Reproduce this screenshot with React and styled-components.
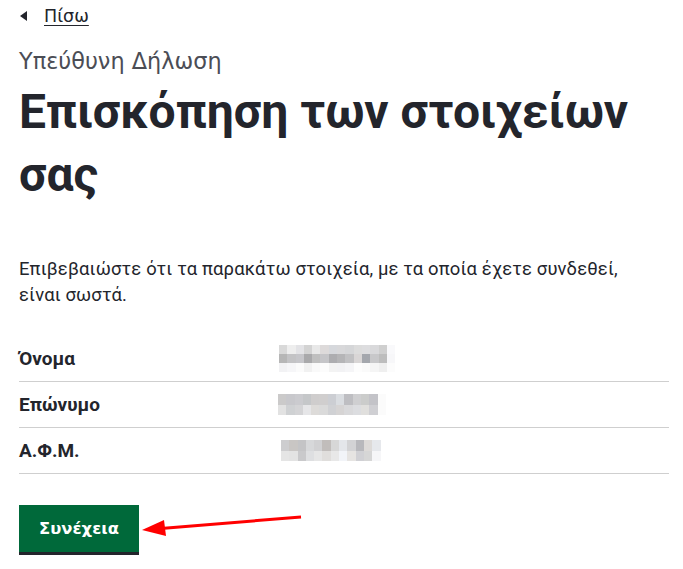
import React from "react";
import styled, { createGlobalStyle } from "styled-components";

const Global = createGlobalStyle`
  html, body { margin: 0; padding: 0; background: #fff; }
  body { font-family: Roboto, "Noto Sans", sans-serif; color: #23252c; }
`;

const Page = styled.div`
  padding: 6px 14px 0 19px;
  display: flex;
  flex-direction: column;
`;

const Back = styled.a`
  display: inline-flex;
  align-items: center;
  gap: 17px;
  font-family: "DejaVu Sans", sans-serif;
  font-size: 17.5px;
  line-height: 20px;
  color: #23252c;
  text-decoration: underline;
  text-underline-offset: 3px;
  align-self: flex-start;
`;

const Triangle = styled.span`
  width: 0;
  height: 0;
  margin-left: 1px;
  border-top: 5.5px solid transparent;
  border-bottom: 5.5px solid transparent;
  border-right: 7px solid #23252c;
`;

const Caption = styled.div`
  margin-top: 21px;
  font-family: "DejaVu Sans", sans-serif;
  font-size: 22.4px;
  line-height: 28px;
  color: #4b4d55;
`;

const Title = styled.h1`
  margin: 5px 0 0;
  font-family: Roboto, sans-serif;
  font-weight: 700;
  font-size: 48px;
  line-height: 63px;
  color: #23252c;
`;

const Lead = styled.p`
  margin: 50px 0 0;
  max-width: 622px;
  font-size: 18.4px;
  letter-spacing: 0.15px;
  line-height: 26px;
`;

const Table = styled.div`
  margin-top: 28px;
  width: 650px;
  display: flex;
  flex-direction: column;
`;

const Row = styled.div`
  display: grid;
  grid-template-columns: 260px 1fr;
  align-items: center;
  height: 45px;
  border-bottom: 1px solid #cfcfcf;
`;

const Label = styled.div`
  font-weight: 700;
  font-size: 19px;
`;

const Pixels = styled.div`
  display: grid;
  grid-template-columns: repeat(${(p) => p.$cols}, 8.3px);
  grid-auto-rows: ${(p) => p.$rowH}px;
  margin-left: ${(p) => p.$offset}px;
`;

const Cell = styled.span`
  background: ${(p) => p.$c};
`;

const Actions = styled.div`
  position: relative;
  margin-top: 31px;
  height: 50px;
`;

const Button = styled.button`
  background: #00693a;
  color: #fff;
  border: 0;
  border-bottom: 3px solid #23252c;
  font-family: "DejaVu Sans", sans-serif;
  font-weight: 700;
  font-size: 16.4px;
  height: 50px;
  padding: 0 20px;
  cursor: pointer;
`;

const Arrow = styled.svg`
  position: absolute;
  left: 112px;
  top: -1px;
  overflow: visible;
`;

const pix1 = [
  "#d9d9d9","#eeeeee","#e3e3e6","#d3d3d3","#e8e8e8","#dddada","#d6d8dc","#d8d8da","#d5d6d8","#dcdcdc","#dddddf","#d9d9db","#cfcfcf","#f9f9fb",
  "#b6b6b6","#c3c3c5","#c6c6ca","#a9a9ab","#bfbfbf","#c5c5c8","#adadb0","#b5b5b7","#c1c1c3","#d9d6d6","#a4a7ad","#c8c8ca","#bdbdbd","#f7f7f9",
  "#f2f2f4","#f6f6f8","#fbfbfb","#f1f1f1","#f9f9f9","#fcfcfc","#f3f3f3","#f2f2f4","#f5f5f7","#fdfdfd","#fafafa","#f5f5f5","#efefef","#fcfcfc",
];
const pix2 = [
  "#cbcaca","#c8c8cc","#cbcbcf","#c5c7c9","#cfcdcd","#d0cece","#ccced3","#dadde1","#bebec2","#cfcfd1","#cbcccb","#c3c3c8","#fbfbfb",
  "#e2e2e2","#cfd1d3","#d4d4d6","#e6e6e8","#dddbd9","#dadada","#d0d1d4","#d6d4d4","#d9d9db","#dcdde0","#e0dfdd","#cfcfd3","#fbfbfb",
];
const pix3 = [
  "#cdcdcf","#c9c6c4","#c4c4c6","#d7d8da","#d1d1d3","#c1bdbb","#d7d7d7","#e4e6ea","#d3d3d5","#b8b8bc","#dddad8","#e6e8ec",
  "#e5e5e5","#e3e3e3","#c9c9cb","#dedfe1","#e6e6e6","#e0dedc","#e8e8e8","#f2f4f8","#e6e4e2","#d0d0d4","#d6d6d6","#f6f6f8",
];

const rows = [
  { label: "Όνομα", cells: pix1, cols: 14, rowH: 8.7, offset: 0 },
  { label: "Επώνυμο", cells: pix2, cols: 13, rowH: 10.5, offset: -1 },
  { label: "Α.Φ.Μ.", cells: pix3, cols: 12, rowH: 10.5, offset: 2 },
];

export default function App() {
  return (
    <>
      <Global />
      <Page>
        <Back href="#">
          <Triangle />
          Πίσω
        </Back>
        <Caption>Υπεύθυνη Δήλωση</Caption>
        <Title>Επισκόπηση των στοιχείων σας</Title>
        <Lead>
          Επιβεβαιώστε ότι τα παρακάτω στοιχεία, με τα οποία έχετε συνδεθεί,
          είναι σωστά.
        </Lead>
        <Table>
          {rows.map((r) => (
            <Row key={r.label}>
              <Label>{r.label}</Label>
              <Pixels $cols={r.cols} $rowH={r.rowH} $offset={r.offset}>
                {r.cells.map((c, i) => (
                  <Cell key={i} $c={c} />
                ))}
              </Pixels>
            </Row>
          ))}
        </Table>
        <Actions>
          <Button>Συνέχεια</Button>
          <Arrow width="180" height="40" viewBox="0 0 180 40">
            <line x1="170" y1="13" x2="30" y2="24.5" stroke="#ff0000" strokeWidth="3" />
            <polygon points="11,26 33,16 35,32" fill="#ff0000" />
          </Arrow>
        </Actions>
      </Page>
    </>
  );
}
